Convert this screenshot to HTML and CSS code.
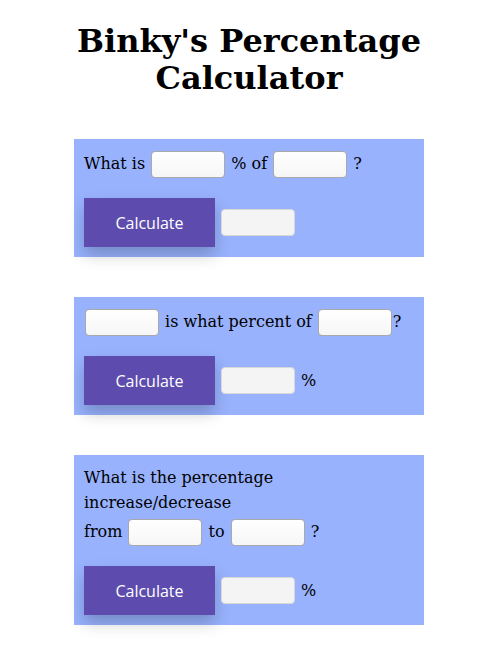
FILE: index.html
```html
<!DOCTYPE html>
<html>
<head>
<meta charset="utf-8">
<title>Binky's Percentage Calculator</title>
<link rel="stylesheet" href="styles.css">
</head>
<body>
<div class="page">
  <h1 class="title">Binky's Percentage Calculator</h1>

  <div class="card">
    <div class="question">What is <input class="field" type="text"> % of <input class="field" type="text"> ?</div>
    <div class="actions">
      <button class="calc">Calculate</button>
      <input class="field result" type="text" readonly>
    </div>
  </div>

  <div class="card">
    <div class="question"><input class="field" type="text"> is what percent of <input class="field" type="text">?</div>
    <div class="actions">
      <button class="calc">Calculate</button>
      <input class="field result" type="text" readonly>
      <span class="unit">%</span>
    </div>
  </div>

  <div class="card">
    <div class="question">What is the percentage increase/decrease</div>
    <div class="question question-row">from <input class="field" type="text"> to <input class="field" type="text"> ?</div>
    <div class="actions">
      <button class="calc">Calculate</button>
      <input class="field result" type="text" readonly>
      <span class="unit">%</span>
    </div>
  </div>
</div>
</body>
</html>
```

FILE: styles.css
```css
body {
  margin: 0;
  background: #ffffff;
  font-family: "DejaVu Serif", serif;
  font-size: 16px;
  color: #000;
}

.page {
  padding: 23px 12px 8px 8px;
  display: flex;
  flex-direction: column;
  align-items: center;
}

.title {
  margin: 0 0 42px;
  font-size: 32px;
  font-weight: bold;
  text-align: center;
  line-height: 37px;
}

.card {
  box-sizing: border-box;
  width: 350px;
  background: #98b2fd;
  padding: 10px;
  margin-bottom: 40px;
}

.question {
  line-height: 25px;
}

.question-row {
  margin-top: 2px;
}

.field {
  box-sizing: border-box;
  width: 74px;
  height: 27px;
  margin: 2px 1px;
  border: 1px solid #a9a9a9;
  border-radius: 4px;
  background: linear-gradient(#ffffff, #f6f6f6);
  vertical-align: middle;
  font: inherit;
  padding: 0 4px;
}

.actions {
  margin-top: 18px;
  display: flex;
  align-items: center;
  gap: 6px;
}

.actions .field {
  margin: 0;
}

.calc {
  width: 131px;
  height: 49px;
  border: none;
  margin: 0;
  background: #5d4cae;
  color: #ffffff;
  font-family: "Open Sans", "Noto Sans", sans-serif;
  font-size: 16px;
  box-shadow: 0 8px 16px rgba(0, 0, 0, 0.22);
  cursor: pointer;
}

.result {
  background: #f4f4f4;
  border-color: #d8d8d8;
}
```
